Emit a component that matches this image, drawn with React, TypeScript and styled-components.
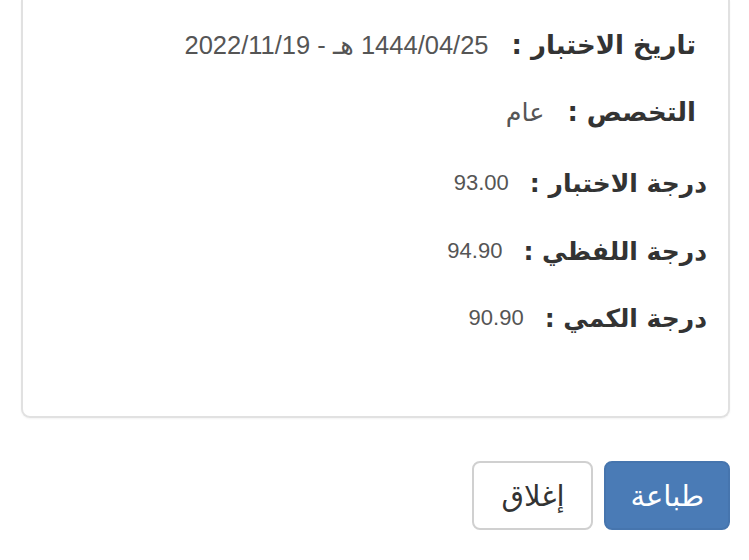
import React from "react";
import styled, { createGlobalStyle } from "styled-components";

const Global = createGlobalStyle`
  html, body { margin: 0; padding: 0; background: #ffffff; }
  body { font-family: "DejaVu Sans", "Liberation Sans", sans-serif; }
`;

const Page = styled.div`
  direction: rtl;
  width: 749px;
  height: 560px;
  box-sizing: border-box;
  padding: 0 19px 0 19px;
  display: flex;
  flex-direction: column;
`;

const Card = styled.div`
  background: #fff;
  border: 2px solid #e1e1e1;
  border-top: 0;
  border-radius: 0 0 9px 9px;
  box-shadow: 0 1px 2px rgba(0, 0, 0, 0.05);
  height: 418px;
  box-sizing: border-box;
  margin-left: 2px;
  padding: 14px 0 0 0;
  display: flex;
  flex-direction: column;
`;

const Row = styled.div<{ $big?: boolean; $h: number }>`
  display: flex;
  align-items: center;
  height: ${(p) => p.$h}px;
  padding-right: ${(p) => (p.$big ? 32 : 21)}px;
`;

const Label = styled.span<{ $big?: boolean }>`
  font-family: "DejaVu Sans", sans-serif;
  font-weight: bold;
  font-size: ${(p) => (p.$big ? 26 : 25)}px;
  color: #333;
  white-space: nowrap;
`;

const Value = styled.span<{ $big?: boolean }>`
  font-family: "Liberation Sans", "DejaVu Sans", sans-serif;
  font-size: ${(p) => (p.$big ? 25.5 : 22)}px;
  color: #555;
  margin-right: ${(p) => (p.$big ? 23 : 21)}px;
  white-space: nowrap;
`;

const Footer = styled.div`
  display: flex;
  gap: 11px;
  padding-top: 43px;
`;

const Button = styled.button<{ $primary?: boolean }>`
  height: 69px;
  box-sizing: border-box;
  padding: 0 ${(p) => (p.$primary ? 24 : 27)}px;
  border-radius: 8px;
  font-family: "DejaVu Sans", sans-serif;
  font-size: 29px;
  font-weight: normal;
  cursor: pointer;
  border: 2px solid ${(p) => (p.$primary ? "#4675ae" : "#d0d0d0")};
  background: ${(p) => (p.$primary ? "#4a7bb6" : "#ffffff")};
  color: ${(p) => (p.$primary ? "#ffffff" : "#333333")};
`;

const rows = [
  { label: "تاريخ الاختبار :", value: "1444/04/25 هـ - 2022/11/19", big: true, h: 62 },
  { label: "التخصص :", value: "عام", big: true, h: 72 },
  { label: "درجة الاختبار :", value: "93.00", big: false, h: 70 },
  { label: "درجة اللفظي :", value: "94.90", big: false, h: 66 },
  { label: "درجة الكمي :", value: "90.90", big: false, h: 68 },
];

export default function App() {
  return (
    <>
      <Global />
      <Page>
        <Card>
          {rows.map((r) => (
            <Row key={r.label} $big={r.big} $h={r.h}>
              <Label $big={r.big}>{r.label}</Label>
              <Value $big={r.big}>{r.value}</Value>
            </Row>
          ))}
        </Card>
        <Footer>
          <Button $primary>طباعة</Button>
          <Button>إغلاق</Button>
        </Footer>
      </Page>
    </>
  );
}
